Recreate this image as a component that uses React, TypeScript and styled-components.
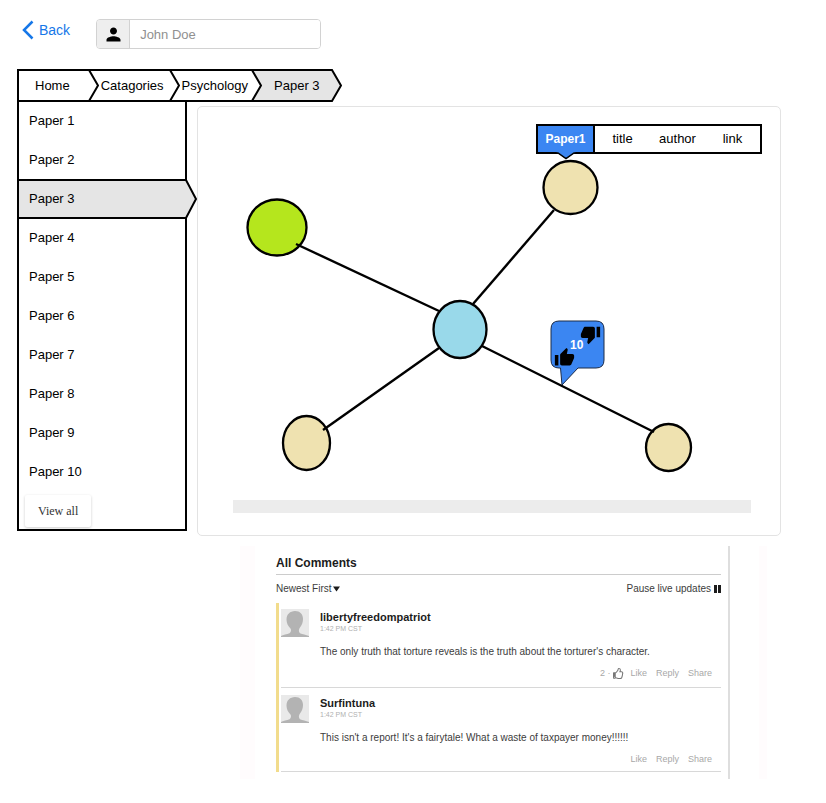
import React from 'react';
import styled, { createGlobalStyle } from 'styled-components';
import { MdPerson, MdThumbDown, MdThumbUp } from 'react-icons/md';
import { FaRegThumbsUp } from 'react-icons/fa';

const GlobalStyle = createGlobalStyle`
  *, *::before, *::after { box-sizing: border-box; }
  body {
    margin: 0;
    background: #fff;
    color: #000;
    font-family: "Liberation Sans", Arial, sans-serif;
    font-size: 13px;
    line-height: 16px;
  }
  a { color: inherit; text-decoration: none; }
  button, input, select { font: inherit; color: inherit; }
  ul, ol { list-style: none; margin: 0; padding: 0; }
`;

const Page = styled.div`
  padding: 19px 45px 20px 17px;
`;

const Header = styled.header`
  display: flex;
  align-items: flex-start;
  gap: 26px;
  height: 50px;
  padding-left: 5px;
`;

const BackButton = styled.button`
  display: flex;
  align-items: center;
  gap: 5px;
  height: 22px;
  padding: 0;
  border: 0;
  background: none;
  color: #1677e8;
  font-size: 14px;
  cursor: pointer;
`;

const UserField = styled.label`
  display: flex;
  width: 225px;
  height: 30px;
  border: 1px solid #d2d2d2;
  border-radius: 4px;
  overflow: hidden;
`;

const UserIcon = styled.span`
  display: flex;
  flex: 0 0 33px;
  align-items: center;
  justify-content: center;
  background: #eee;
  border-right: 1px solid #d2d2d2;
`;

const UserInput = styled.input`
  flex: 1;
  min-width: 0;
  padding: 1px 10px 0;
  border: 0;
  outline: 0;
  background: #fff;
  &::placeholder { color: #909090; opacity: 1; }
`;

const CrumbList = styled.ol`
  display: flex;
  height: 33px;
`;

const Crumb = styled.li<{ $current?: boolean }>`
  display: flex;
  &:first-child { border-left: 2px solid #000; }
  a {
    display: flex;
    align-items: center;
    border: solid #000;
    border-width: 2px 0;
    background: ${(p) => (p.$current ? '#e5e5e5' : '#fff')};
  }
`;

const CrumbLink = styled.a<{ $pad: string }>`
  padding: ${(p) => p.$pad};
`;

const Body = styled.div`
  display: grid;
  grid-template-columns: 180px minmax(0, 1fr);
  align-items: start;
`;

const Sidebar = styled.nav`
  width: 170px;
  margin-top: -1px;
  padding-bottom: 2px;
  border: solid #000;
  border-width: 0 2px 2px;
`;

const PaperRow = styled.li<{ $active?: boolean }>`
  position: relative;
  height: ${(p) => (p.$active ? '40px' : '39px')};
  margin-bottom: ${(p) => (p.$active ? '-1px' : '0')};
  background: ${(p) => (p.$active ? '#e5e5e5' : 'none')};
  border: solid #000;
  border-width: ${(p) => (p.$active ? '2px 0' : '0')};
  a {
    display: block;
    padding: ${(p) => (p.$active ? '10px' : '12px')} 10px 0;
  }
`;

const RowPointer = styled.svg`
  position: absolute;
  top: -2px;
  left: 100%;
`;

const ViewAll = styled.button`
  display: block;
  height: 32px;
  margin: 4px 0 0 6px;
  padding: 0 13px;
  border: 0;
  border-radius: 2px;
  background: #fff;
  box-shadow: 0 1px 3px rgba(0, 0, 0, 0.2);
  color: #333;
  font-family: "Liberation Serif", "Times New Roman", serif;
  font-size: 12px;
  cursor: pointer;
`;

const Canvas = styled.section`
  position: relative;
  margin-top: 4px;
  padding-bottom: 22px;
  border: 1px solid #e3e3e3;
  border-radius: 5px;
`;

const Graph = styled.svg`
  display: block;
  margin-bottom: 13px;
  overflow: visible;
`;

const Strip = styled.div`
  height: 13px;
  margin: 0 29px 0 35px;
  background: #ececec;
`;

const NodeMenu = styled.div`
  position: absolute;
  top: 17px;
  left: 338px;
  display: flex;
  height: 30px;
  border: 2px solid #000;
  background: #fff;
`;

const NodeMenuItem = styled.a<{ $selected?: boolean }>`
  position: relative;
  display: flex;
  align-items: center;
  justify-content: center;
  width: ${(p) => (p.$selected ? '57px' : '55px')};
  background: ${(p) => (p.$selected ? '#3b86f2' : '#fff')};
  border-right: ${(p) => (p.$selected ? '2px solid #000' : '0')};
  && { color: ${(p) => (p.$selected ? '#fff' : '#000')}; }
  font-size: ${(p) => (p.$selected ? '12px' : '13px')};
  font-weight: ${(p) => (p.$selected ? 'bold' : 'normal')};
`;

const MenuPointer = styled.svg`
  position: absolute;
  top: 100%;
  left: 17px;
`;

const VoteBubble = styled.div`
  position: absolute;
  top: 213px;
  left: 352px;
  width: 55px;
  height: 67px;
`;

const BubbleShape = styled.svg`
  position: absolute;
  inset: 0;
`;

const VoteButton = styled.button<{ $down?: boolean }>`
  position: absolute;
  top: ${(p) => (p.$down ? '4px' : '27px')};
  left: ${(p) => (p.$down ? '30px' : '4px')};
  display: flex;
  padding: 0;
  border: 0;
  background: none;
  color: #000;
  cursor: pointer;
`;

const VoteCount = styled.span`
  position: absolute;
  top: 17px;
  left: 20px;
  color: #fff;
  font-size: 12px;
  font-weight: bold;
`;

const Comments = styled.section`
  grid-column: 2;
  display: flex;
  margin: 10px 14px 0 43px;
  border: solid #fffcfd;
  border-width: 0 8px 0 15px;
  font-size: 10px;
  line-height: 12px;
  color: #3c3c3c;
`;

const CommentsInner = styled.div`
  flex: 1;
  min-width: 0;
  margin: 0 29px 0 21px;
  padding: 9px 7px 7px 0;
  border-right: 2px solid #dedede;
`;

const CommentsTitle = styled.h2`
  margin: 0;
  padding-bottom: 3px;
  border-bottom: 1px solid #ccc;
  color: #1c1c1c;
  font-size: 12px;
  line-height: 16px;
`;

const CommentsBar = styled.div`
  display: flex;
  align-items: center;
  justify-content: space-between;
  height: 28px;
`;

const SortField = styled.label`
  display: flex;
  align-items: center;
  gap: 1px;
  select {
    appearance: none;
    padding: 0;
    border: 0;
    background: none;
  }
`;

const PauseButton = styled.button`
  display: flex;
  align-items: center;
  gap: 3px;
  padding: 0;
  border: 0;
  background: none;
  cursor: pointer;
`;

const CommentList = styled.ul`
  border-left: 3px solid #f2dc8c;
`;

const Comment = styled.li`
  display: grid;
  grid-template-columns: 28px minmax(0, 1fr);
  column-gap: 11px;
  margin-left: 2px;
  padding: 6px 0 7px;
  border-bottom: 1px solid #d8d8d8;
  & + & { padding: 7px 0 5px; }
`;

const Author = styled.h3`
  margin: 2px 0 0;
  color: #1c1c1c;
  font-size: 11px;
  line-height: 12px;
`;

const Stamp = styled.time`
  display: block;
  color: #b0b0b0;
  font-size: 7px;
  line-height: 12px;
`;

const CommentText = styled.p`
  margin: 11px 0 8px;
`;

const Actions = styled.div`
  display: flex;
  align-items: center;
  justify-content: flex-end;
  gap: 9px;
  height: 14px;
  padding-right: 9px;
  color: #a8a8a8;
  font-size: 9px;
`;

const ActionButton = styled.button`
  padding: 0;
  border: 0;
  background: none;
  cursor: pointer;
`;

const LikeTally = styled.span`
  display: flex;
  align-items: center;
  gap: 3px;
  margin-right: -3px;
  svg { color: #777; }
`;

const crumbs = [
  { label: 'Home', pad: '0 18px 0 16px' },
  { label: 'Catagories', pad: '0 5px 0 2px' },
  { label: 'Psychology', pad: '0 3px 0 2px' },
  { label: 'Paper 3', pad: '0 11px 0 12px' },
];

const papers = Array.from({ length: 10 }, (_, i) => `Paper ${i + 1}`);
const currentPaper = 'Paper 3';

const nodes = [
  { cx: 79, cy: 120.5, rx: 29.5, ry: 28, fill: '#b5e61d' },
  { cx: 262, cy: 222.5, rx: 26.5, ry: 28.5, fill: '#99d9ea' },
  { cx: 108.5, cy: 336, rx: 23.5, ry: 27, fill: '#efe2b0' },
  { cx: 372.5, cy: 80.5, rx: 27, ry: 26.5, fill: '#efe2b0' },
  { cx: 470.5, cy: 340.5, rx: 22.5, ry: 23.5, fill: '#efe2b0' },
];

const edges = [
  [98, 137, 241, 204],
  [356, 103, 275, 197],
  [125, 323, 241, 241],
  [284, 239, 456, 325],
];

const comments = [
  {
    author: 'libertyfreedompatriot',
    text: "The only truth that torture reveals is the truth about the torturer's character.",
    likes: 2,
  },
  {
    author: 'Surfintuna',
    text: "This isn't a report! It's a fairytale! What a waste of taxpayer money!!!!!!",
    likes: 0,
  },
];

function CrumbArrow({ current, next }: { current: boolean; next: boolean }) {
  return (
    <svg width="11" height="33" viewBox="0 0 11 33" aria-hidden="true">
      {next && <rect y="1" width="11" height="31" fill="#e5e5e5" />}
      {!current && <path d="M0 1h11M0 32h11" stroke="#000" strokeWidth="2" />}
      <path
        d="M0 1H1L10 16.5L1 32H0"
        fill={current ? '#e5e5e5' : '#fff'}
        stroke="#000"
        strokeWidth="2"
      />
    </svg>
  );
}

function Avatar() {
  return (
    <svg width="28" height="28" viewBox="0 0 28 28" aria-hidden="true">
      <rect width="28" height="28" fill="#e9e9e9" />
      <path
        d="M14 2C9 2 5.500 5.500 5.500 10.500C5.500 14 7 17 9.500 19.500C10.500 21 10 23 8.500 24.200C6 25.500 2 25.500 0 27V28H28V27C25 25.500 21.500 25.500 19 24.200C17.500 23 17.500 20.500 19 18.500C21 16 22 13 22 10C22 5 19 2 14 2Z"
        fill="#b3b3b3"
      />
    </svg>
  );
}

export default function App() {
  return (
    <>
      <GlobalStyle />
      <Page>
        <Header>
          <BackButton type="button">
            <svg width="12" height="20" viewBox="0 0 12 20" aria-hidden="true">
              <path d="M10.500 1.500L2 10L10.500 18.500" fill="none" stroke="#1677e8" strokeWidth="2.500" />
            </svg>
            Back
          </BackButton>
          <UserField>
            <UserIcon>
              <MdPerson size={21} />
            </UserIcon>
            <UserInput type="text" placeholder="John Doe" aria-label="User name" />
          </UserField>
        </Header>

        <nav aria-label="Breadcrumb">
          <CrumbList>
            {crumbs.map((crumb, i) => {
              const current = i === crumbs.length - 1;
              return (
                <Crumb key={crumb.label} $current={current}>
                  <CrumbLink href="#" $pad={crumb.pad}>
                    {crumb.label}
                  </CrumbLink>
                  <CrumbArrow current={current} next={i === crumbs.length - 2} />
                </Crumb>
              );
            })}
          </CrumbList>
        </nav>

        <Body>
          <Sidebar aria-label="Papers">
            <ul>
              {papers.map((paper) => (
                <PaperRow key={paper} $active={paper === currentPaper}>
                  <a href="#">{paper}</a>
                  {paper === currentPaper && (
                    <RowPointer width="12" height="40" viewBox="0 0 12 40" aria-hidden="true">
                      <path d="M0 1H1L11 20L1 39H0" fill="#e5e5e5" stroke="#000" strokeWidth="2" />
                    </RowPointer>
                  )}
                </PaperRow>
              ))}
            </ul>
            <ViewAll type="button">View all</ViewAll>
          </Sidebar>

          <Canvas aria-label="Paper graph">
            <Graph width="100%" height="380" aria-hidden="true">
              {nodes.map((n) => (
                <ellipse key={`${n.cx}`} {...n} stroke="#000" strokeWidth="2.300" />
              ))}
              {edges.map(([x1, y1, x2, y2]) => (
                <line key={`${x1}`} x1={x1} y1={y1} x2={x2} y2={y2} stroke="#000" strokeWidth="2.400" />
              ))}
            </Graph>
            <Strip />

            <NodeMenu>
              <NodeMenuItem href="#" $selected>
                Paper1
                <MenuPointer width="22" height="8" viewBox="0 0 22 8" aria-hidden="true">
                  <path d="M1 0H21L11 7Z" fill="#3b86f2" />
                  <path d="M0 1H3L11 6.500L19 1H22" fill="none" stroke="#000" strokeWidth="1.500" />
                </MenuPointer>
              </NodeMenuItem>
              <NodeMenuItem href="#">title</NodeMenuItem>
              <NodeMenuItem href="#">author</NodeMenuItem>
              <NodeMenuItem href="#">link</NodeMenuItem>
            </NodeMenu>

            <VoteBubble>
              <BubbleShape width="55" height="67" viewBox="0 0 55 67" aria-hidden="true">
                <path
                  d="M9 1H46Q54 1 54 9V40Q54 48 46 48H28L12 65L10.500 48H9Q1 48 1 40V9Q1 1 9 1Z"
                  fill="#3b86f2"
                  stroke="#1c2c48"
                />
              </BubbleShape>
              <VoteButton type="button" $down aria-label="Vote down">
                <MdThumbDown size={21} />
              </VoteButton>
              <VoteButton type="button" aria-label="Vote up">
                <MdThumbUp size={21} />
              </VoteButton>
              <VoteCount>10</VoteCount>
            </VoteBubble>
          </Canvas>

          <Comments>
            <CommentsInner>
              <CommentsTitle>All Comments</CommentsTitle>
              <CommentsBar>
                <SortField>
                  <select aria-label="Sort comments">
                    <option>Newest First</option>
                  </select>
                  <svg width="7" height="7" viewBox="0 0 7 7" aria-hidden="true">
                    <path d="M0 0.500H7L3.500 5.500Z" fill="#1c1c1c" />
                  </svg>
                </SortField>
                <PauseButton type="button">
                  Pause live updates
                  <svg width="7" height="8" viewBox="0 0 7 8" aria-hidden="true">
                    <path d="M0 0H3V8H0ZM4 0H7V8H4Z" fill="#1c1c1c" />
                  </svg>
                </PauseButton>
              </CommentsBar>
              <CommentList>
                {comments.map((c) => (
                  <Comment key={c.author}>
                    <Avatar />
                    <div>
                      <Author>{c.author}</Author>
                      <Stamp>1:42 PM CST</Stamp>
                      <CommentText>{c.text}</CommentText>
                      <Actions>
                        {c.likes > 0 && (
                          <LikeTally>
                            {c.likes} · <FaRegThumbsUp size={11} />
                          </LikeTally>
                        )}
                        <ActionButton type="button">Like</ActionButton>
                        <ActionButton type="button">Reply</ActionButton>
                        <ActionButton type="button">Share</ActionButton>
                      </Actions>
                    </div>
                  </Comment>
                ))}
              </CommentList>
            </CommentsInner>
          </Comments>
        </Body>
      </Page>
    </>
  );
}
